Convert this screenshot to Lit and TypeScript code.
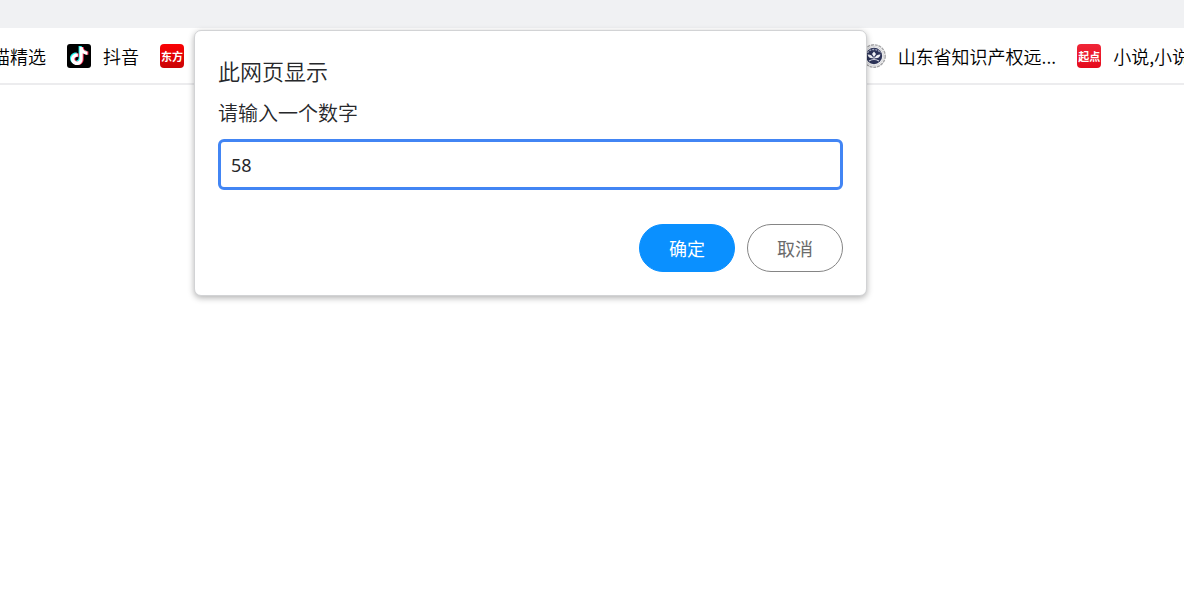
import { LitElement, html, css, svg } from "lit";
import { customElement, state } from "lit/decorators.js";

const noteShape =
  "M12.600 3h3c.2 2.600 1.900 4.400 4.800 4.600v3.200c-1.800 0-3.400-.6-4.700-1.500v5.600c0 3.700-2.600 6.100-5.900 6.100-3.400 0-5.800-2.600-5.800-5.800 0-3.600 3-6.200 6.800-5.700v3.300c-2-.5-3.500.6-3.500 2.300 0 1.400 1.100 2.500 2.500 2.500 1.700 0 2.800-1.200 2.800-2.900z";

const douyinIcon = svg`
  <svg class="icon" viewBox="0 0 24 24" aria-hidden="true">
    <rect width="24" height="24" rx="3" fill="#000" />
    <path d=${noteShape} fill="#25f4ee" transform="translate(-1 -1)" />
    <path d=${noteShape} fill="#fe2c55" transform="translate(1 0)" />
    <path d=${noteShape} fill="#fff" />
  </svg>`;

const sealIcon = svg`
  <svg class="icon" viewBox="0 0 24 24" aria-hidden="true">
    <circle cx="12" cy="12" r="11.200" fill="#f4f4f4" stroke="#a5a5a8" stroke-width="1.400" stroke-dasharray="3 .8" />
    <circle cx="12" cy="12" r="9.500" fill="none" stroke="#d4d5d9" stroke-width="1" />
    <circle cx="12" cy="12" r="8.200" fill="#2c3358" />
    <path d="M5.500 9c2-3 4-3.500 6.500-3.500s4.500.5 6.500 3.500" fill="none" stroke="#a9aec2" stroke-width="1.300" stroke-dasharray="2 1" />
    <path d="M12 7.500l2 2.500-2 3-2-3zM5.500 10.500c3-.2 5 1 5.800 3.800-3 .3-5-.8-5.800-3.800zM18.500 10.500c-3-.2-5 1-5.800 3.800 3 .3 5-.8 5.800-3.800z" fill="#f1f2f6" />
    <path d="M7 17c3-1.800 7-1.800 10 0M12 13v3" fill="none" stroke="#d5d8e3" stroke-width="1.200" />
  </svg>`;

@customElement("app-root")
export class AppRoot extends LitElement {
  @state() private value = "58";

  static styles = css`
    :host {
      display: block;
      position: relative;
      min-height: 100vh;
      background: #fff;
      font-family: "Noto Sans CJK SC", sans-serif;
    }
    .strip {
      height: 28px;
      background: #f0f1f3;
    }
    .bar {
      border-bottom: 2px solid #ececee;
      overflow: hidden;
    }
    .bookmarks {
      display: flex;
      justify-content: space-between;
      margin: 0 -6px 0 -8px;
      height: 55px;
    }
    .group {
      display: flex;
      align-items: center;
      gap: 21px;
    }
    .bookmark {
      display: flex;
      align-items: center;
      gap: 12px;
      color: #000;
      font-size: 18px;
      font-weight: 350;
      line-height: 24px;
      white-space: nowrap;
      text-decoration: none;
    }
    .icon {
      display: block;
      flex: none;
      width: 24px;
      height: 24px;
    }
    .tile {
      border-radius: 4px;
      color: #fff;
      font-size: 11px;
      font-weight: 700;
      text-align: center;
    }
    .east {
      background: linear-gradient(#fb0204, #c90306);
    }
    .qidian {
      background: linear-gradient(#f02638, #e50a1c);
    }
    .dialog {
      position: absolute;
      top: 30px;
      left: 194px;
      box-sizing: border-box;
      width: 673px;
      max-width: calc(100% - 194px);
      margin: 0;
      padding: 23px;
      border: 1px solid #d2d3d5;
      border-radius: 7px;
      background: #fff;
      color: #27282b;
      box-shadow: 0 2px 6px rgba(0, 0, 0, 0.3);
    }
    .title {
      margin: 0 0 12px;
      font-size: 22px;
      font-weight: 350;
      line-height: 32px;
    }
    .message {
      display: block;
      margin-bottom: 11px;
      font-size: 20px;
      font-weight: 350;
      line-height: 30px;
    }
    .field {
      display: block;
      box-sizing: border-box;
      width: 100%;
      height: 51px;
      padding: 0 10px;
      border: 3px solid #4285f4;
      border-radius: 6px;
      outline: none;
      background: #fff;
      color: #27282b;
      font: 18px "Noto Sans", sans-serif;
    }
    .actions {
      display: flex;
      justify-content: flex-end;
      gap: 12px;
      margin-top: 34px;
    }
    .button {
      box-sizing: border-box;
      width: 96px;
      height: 48px;
      padding: 0;
      border: 1px solid #858585;
      border-radius: 24px;
      background: #fff;
      color: #6b6b6b;
      font: 18px "Noto Sans CJK SC", sans-serif;
    }
    .primary {
      border-color: #0a90ff;
      background: #0a90ff;
      color: #fff;
    }
  `;

  render() {
    return html`
      <div class="strip"></div>
      <nav class="bar">
        <div class="bookmarks">
          <div class="group">
            <a class="bookmark" href="#">猫精选</a>
            <a class="bookmark" href="#">${douyinIcon}抖音</a>
            <a class="bookmark" href="#"><span class="icon tile east">东方</span></a>
          </div>
          <div class="group">
            <a class="bookmark" href="#">${sealIcon}山东省知识产权远...</a>
            <a class="bookmark" href="#"><span class="icon tile qidian">起点</span>小说,小说</a>
          </div>
        </div>
      </nav>
      <form class="dialog" role="dialog" aria-labelledby="title" @submit=${(e: Event) => e.preventDefault()}>
        <h1 class="title" id="title">此网页显示</h1>
        <label class="message" for="number">请输入一个数字</label>
        <input
          class="field"
          id="number"
          type="text"
          .value=${this.value}
          @input=${(e: Event) => (this.value = (e.target as HTMLInputElement).value)}
        />
        <div class="actions">
          <button class="button primary" type="submit">确定</button>
          <button class="button" type="button">取消</button>
        </div>
      </form>
    `;
  }
}
